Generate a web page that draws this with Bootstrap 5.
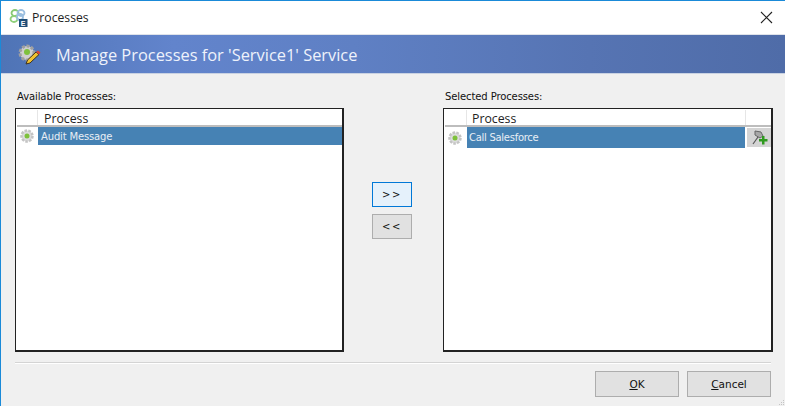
<!DOCTYPE html>
<html lang="en">
<head>
<meta charset="utf-8">
<title>Processes</title>
<link href="https://cdn.jsdelivr.net/npm/bootstrap@5.3.0/dist/css/bootstrap.min.css" rel="stylesheet">
<style>
html,body{height:406px;overflow:hidden}
body{background:#f0f0f0;font-family:"DejaVu Sans",sans-serif;color:#111;font-size:10px;line-height:1}
.win{width:785px;height:406px;border-top:1px solid #1a8ad8;border-left:1px solid #1a8ad8}
.ttl{height:34px;background:#fff;padding-left:8px;gap:4px;font:12.2px "Open Sans",sans-serif;color:#222;border-bottom:1px solid #dfe3ea}
.ttl svg.x{margin-left:auto;margin-right:12px}
.hdr{height:39px;background:linear-gradient(90deg,#4f74b6,#6284cc 22%,#5f80c4 45%,#5674b3 75%,#4f6ca8);color:#eef2fb;font:16.4px "Open Sans",sans-serif;padding-left:16px;gap:14px;border-bottom:1px solid #c9d2e2}
.main{padding:16px 12px 0 14px;height:278px}
.pane-l{width:329px}
.pane-r{width:330px}
.cap{height:18px;padding:2px 0 0 2px;letter-spacing:-.1px;white-space:nowrap}
.lst{height:244px;background:#fff;border:1px solid #222;border-bottom-width:2px;border-right-width:2px;padding:1px 0 0 1px}
.thead{height:17px;border-bottom:2px solid #bdbdbd;font:12.3px/17px "Open Sans",sans-serif;color:#222}
.c0{width:21px;height:100%;border-right:1px solid #e6e6e6}
.cn{padding-left:6px;flex:1;height:100%}
.pane-r .c0{width:22px}
.pane-r .cn{padding-left:5px}
.cx{width:26px;height:100%;border-left:1px solid #e6e6e6}
.trow{height:18px}
.pane-r .trow{height:21px}
.gear{width:21px;height:100%;padding-right:2px}
.pane-r .gear{width:22px}
.cell{flex:1;height:100%;background:#4682b4;color:#e8eef5;padding:1px 0 0 3px;letter-spacing:-.15px}
.pane-r .cell{padding:1px 0 0 2px;letter-spacing:-.28px}
.addb{width:24px;height:19px;background:#d4d4d4;margin:0 0 0 2px}
.mid{width:99px;padding:92px 3px 0 0;gap:7px}
.wb{width:40px;height:25px;background:#e1e1e1;border:1px solid #adadad;border-radius:0;padding:0;color:#111;font:10px "DejaVu Sans",sans-serif;letter-spacing:1.5px;--bs-btn-hover-bg:#e1e1e1}
.wb.on{background:#e5f1fb;border-color:#0078d7}
.sep{margin:10px 0 0 14px;height:2px;background:#d4d4d4;border-bottom:1px solid #fff;width:756px}
.foot{padding:7px 14px 0 0;gap:8px}
.foot .wb{width:84px;height:26px;font-size:10.5px;letter-spacing:0}
.grip{position:absolute;right:0;bottom:0}
</style>
</head>
<body>
<div class="win d-flex flex-column">
  <div class="ttl d-flex align-items-center">
    <svg width="19" height="19" viewBox="0 0 19 19"><g fill="none" stroke-width="1.800"><ellipse cx="6" cy="5" rx="3.500" ry="3" stroke="#86c873"/><ellipse cx="12" cy="5" rx="3.500" ry="3" stroke="#9cbfe0"/><ellipse cx="5" cy="11" rx="3.500" ry="3" stroke="#8fd07a"/><ellipse cx="11" cy="9" rx="3" ry="3" stroke="#9cbfe0"/></g><rect x="10" y="11" width="8.500" height="8" fill="#1f4e79"/><text x="14.200" y="17.500" font-size="7" font-weight="700" fill="#fff" text-anchor="middle" font-family="Liberation Sans">E</text></svg>
    <span>Processes</span>
    <svg class="x" width="13" height="13" viewBox="0 0 13 13"><path d="M1 1l11 11M12 1L1 12" stroke="#222" stroke-width="1.1" fill="none"/></svg>
  </div>
  <div class="hdr d-flex align-items-center">
    <svg width="25" height="22" viewBox="0 0 25 22"><circle cx="10" cy="10" r="7" fill="#cfcfcf" stroke="#a0a0a0" stroke-dasharray="3 1.600" stroke-width="3"/><circle cx="10" cy="9" r="3" fill="#7ec13c"/><path d="M9 21l1.500-4L19 9l3 2.500L13 20z" fill="#f2c230" stroke="#3d3320" stroke-width="1"/><path d="M19 9l3 2.500 1.500-2L21 7.500z" fill="#d8453a"/></svg>
    <span>Manage Processes for 'Service1' Service</span>
  </div>
  <div class="main d-flex">
    <div class="pane-l">
      <div class="cap">Available Processes:</div>
      <div class="lst">
        <div class="thead d-flex"><div class="c0"></div><div class="cn">Process</div></div>
        <div class="trow d-flex align-items-center">
          <div class="gear d-flex align-items-center justify-content-center"><svg width="16" height="16" viewBox="0 0 16 16"><circle cx="8" cy="8" r="5.500" fill="#dcdcdc" stroke="#c4c4c4" stroke-width="2.500" stroke-dasharray="2.500 1.300"/><circle cx="8" cy="8" r="2.500" fill="#7ec13c"/></svg></div>
          <div class="cell d-flex align-items-center">Audit Message</div>
        </div>
      </div>
    </div>
    <div class="mid d-flex flex-column align-items-center">
      <button type="button" class="btn wb on">&gt;&gt;</button>
      <button type="button" class="btn wb">&lt;&lt;</button>
    </div>
    <div class="pane-r">
      <div class="cap">Selected Processes:</div>
      <div class="lst">
        <div class="thead d-flex"><div class="c0"></div><div class="cn">Process</div><div class="cx"></div></div>
        <div class="trow d-flex align-items-center">
          <div class="gear d-flex align-items-center justify-content-center"><svg width="16" height="16" viewBox="0 0 16 16"><circle cx="8" cy="8" r="5.500" fill="#dcdcdc" stroke="#c4c4c4" stroke-width="2.500" stroke-dasharray="2.500 1.300"/><circle cx="8" cy="8" r="2.500" fill="#7ec13c"/></svg></div>
          <div class="cell d-flex align-items-center">Call Salesforce</div>
          <div class="addb d-flex align-items-center justify-content-center"><svg width="17" height="17" viewBox="0 0 17 17"><path d="M2 15L7 8" stroke="#555" stroke-width="1.200" fill="none"/><path d="M4 2l6 1 2 4-3 2-5-3z" fill="#a8a8a8" stroke="#666" stroke-width="1"/><path d="M11 7h2.500v3H16.500v2.500h-3v3H11v-3H8V10h3z" fill="#2f9a1f"/></svg></div>
        </div>
      </div>
    </div>
  </div>
  <div class="sep"></div>
  <div class="foot d-flex justify-content-end">
    <button type="button" class="btn wb"><u>O</u>K</button>
    <button type="button" class="btn wb"><u>C</u>ancel</button>
  </div>
</div>
<svg class="grip" width="7" height="7" viewBox="0 0 7 7"><path d="M5 1h1v1H5zM3 3h1v1H3zM5 3h1v1H5zM1 5h1v1H1zM3 5h1v1H3zM5 5h1v1H5z" fill="#c4c4c4"/></svg>
</body>
</html>
